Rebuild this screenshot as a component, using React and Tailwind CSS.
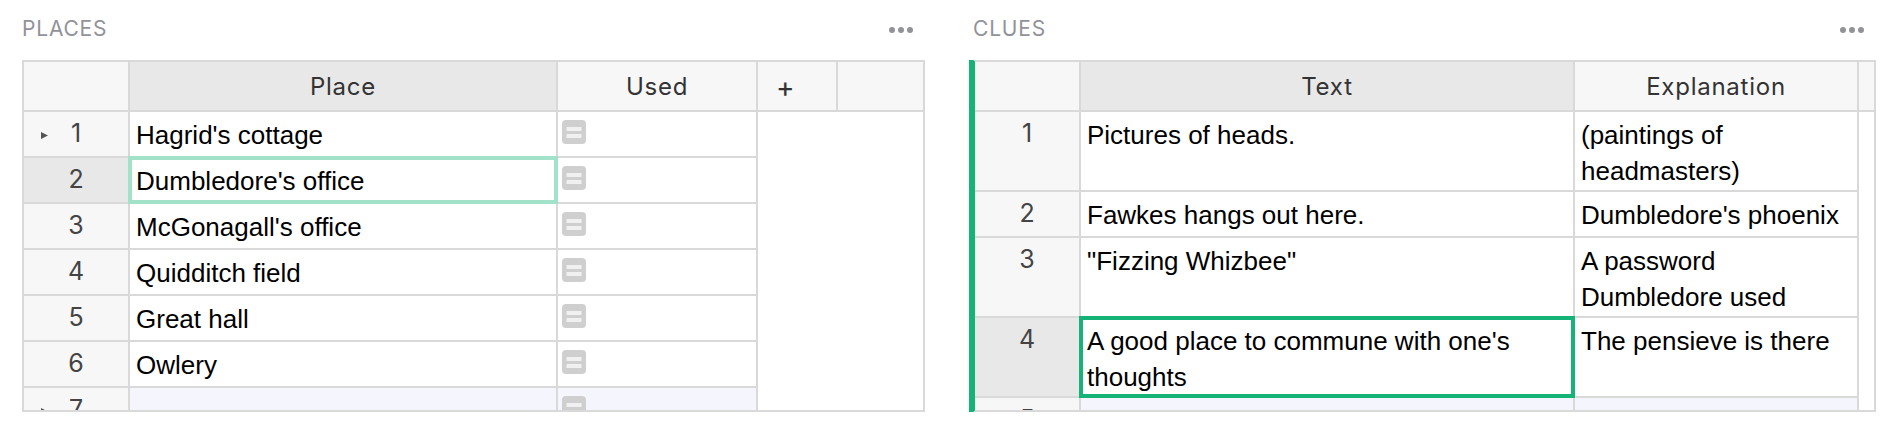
import React from 'react';

const places = ["Hagrid's cottage", "Dumbledore's office", "McGonagall's office", 'Quidditch field', 'Great hall', 'Owlery', ''];

const clues = [
  { h: 'h-[80px]', text: 'Pictures of heads.', note: '(paintings of headmasters)' },
  { h: 'h-[46px]', text: 'Fawkes hangs out here.', note: "Dumbledore's phoenix" },
  { h: 'h-[80px]', text: '"Fizzing Whizbee"', note: 'A password Dumbledore used' },
  { h: 'h-[80px]', text: "A good place to commune with one's thoughts", note: 'The pensieve is there', selected: true },
  { h: 'h-[46px]', text: '', note: '', isNew: true },
];

const ToggleIcon = () => (
  <svg width="24" height="24" viewBox="0 0 24 24" className="block">
    <rect width="24" height="24" rx="4" fill="#cfcfcf" />
    <rect x="4.5" y="7" width="15" height="4" fill="#f0f0f0" />
    <rect x="4.5" y="14" width="15" height="4" fill="#f0f0f0" />
  </svg>
);

const Dots = () => (
  <svg width="24" height="6" viewBox="0 0 24 6" className="block">
    <circle cx="3" cy="3" r="3" fill="#929299" />
    <circle cx="12" cy="3" r="3" fill="#929299" />
    <circle cx="21" cy="3" r="3" fill="#929299" />
  </svg>
);

const Arrow = () => (
  <svg width="7" height="7" viewBox="0 0 7 7" className="absolute left-[17px] top-[20px]">
    <polygon points="0,0 7,3.5 0,7" fill="#555555" />
  </svg>
);

const SectionTitle = ({ title }) => (
  <div className="h-[60px] flex items-center justify-between pr-[12px]">
    <span className="pb-[3px] font-['Inter',sans-serif] text-[21px] text-[#929299] tracking-[0.8px]">{title}</span>
    <Dots />
  </div>
);

const HeaderCell = ({ width, active, children }) => (
  <div className={`${width} ${active ? 'bg-[#e8e8e8]' : 'bg-[#f7f7f7]'} h-full shrink-0 border-r-2 border-[#d9d9d9] pt-[1px] flex items-center justify-center font-['Inter',sans-serif] text-[24px] tracking-[0.75px] text-[#333333]`}>
    {children}
  </div>
);

const RowNumber = ({ n, active, arrow }) => (
  <div className={`relative w-[106px] shrink-0 self-stretch border-r-2 border-b-2 border-[#d9d9d9] ${active ? 'bg-[#e8e8e8]' : 'bg-[#f7f7f7]'} text-center font-['Inter',sans-serif] text-[25px] leading-[43px] text-[#444444]`}>
    {arrow && <Arrow />}
    {n}
  </div>
);

const PlacesTable = () => (
  <div className="h-[352px] border-2 border-[#d9d9d9] overflow-hidden bg-white">
    <div className="h-[50px] flex border-b-2 border-[#d9d9d9]">
      <HeaderCell width="w-[106px]" />
      <HeaderCell width="w-[428px]" active>Place</HeaderCell>
      <HeaderCell width="w-[200px]">Used</HeaderCell>
      <div className="w-[80px] h-full shrink-0 bg-[#f7f7f7] border-r-2 border-[#d9d9d9] pl-[18px] font-['Inter',sans-serif] text-[28px] leading-[50px] text-[#333333]">+</div>
      <div className="flex-1 bg-[#f7f7f7]" />
    </div>
    {places.map((place, i) => {
      const isNew = i === 6;
      return (
        <div key={i} className="h-[46px] flex">
          <RowNumber n={i + 1} active={i === 1} arrow={i === 0 || isNew} />
          <div className={`relative w-[428px] shrink-0 border-r-2 border-b-2 border-[#d9d9d9] px-[6px] font-['Liberation_Sans',sans-serif] text-[26px] leading-[36px] pt-[5px] text-black ${isNew ? 'bg-[#f5f6fd]' : 'bg-white'}`}>
            {place}
            {i === 1 && <div className="absolute -inset-[2px] border-4 border-[#a2e2c9]" />}
          </div>
          <div className={`w-[200px] shrink-0 border-r-2 border-b-2 border-[#d9d9d9] pl-[4px] pt-[8px] ${isNew ? 'bg-[#f5f6fd]' : 'bg-white'}`}>
            <ToggleIcon />
          </div>
        </div>
      );
    })}
  </div>
);

const CluesTable = () => (
  <div className="flex">
    <div className="w-[6px] h-[352px] bg-[#16b378] rounded-tr-[2px] rounded-br-[2px]" />
    <div className="flex-1 h-[352px] border-y-2 border-r-2 border-[#d9d9d9] overflow-hidden bg-white">
      <div className="h-[50px] flex border-b-2 border-[#d9d9d9]">
        <HeaderCell width="w-[106px]" />
        <HeaderCell width="w-[494px]" active>Text</HeaderCell>
        <HeaderCell width="w-[284px]">Explanation</HeaderCell>
        <div className="flex-1 bg-[#f7f7f7]" />
      </div>
      {clues.map((row, i) => (
        <div key={i} className={`${row.h} flex`}>
          <RowNumber n={i + 1} active={row.selected} />
          <div className={`relative w-[494px] shrink-0 border-r-2 border-b-2 border-[#d9d9d9] px-[6px] pt-[5px] font-['Liberation_Sans',sans-serif] text-[26px] leading-[36px] text-black ${row.isNew ? 'bg-[#f5f6fd]' : 'bg-white'}`}>
            {row.text}
            {row.selected && <div className="absolute -inset-[2px] border-4 border-[#16b378]" />}
          </div>
          <div className={`w-[284px] shrink-0 border-r-2 border-b-2 border-[#d9d9d9] px-[6px] pt-[5px] font-['Liberation_Sans',sans-serif] text-[26px] leading-[36px] text-black ${row.isNew ? 'bg-[#f5f6fd]' : 'bg-white'}`}>
            {row.note}
          </div>
        </div>
      ))}
    </div>
  </div>
);

export default function App() {
  return (
    <div className="w-[1899px] h-[437px] bg-white pl-[22px] flex gap-[44px] overflow-hidden">
      <div className="w-[903px] shrink-0">
        <SectionTitle title="PLACES" />
        <PlacesTable />
      </div>
      <div className="w-[907px] shrink-0">
        <div className="pl-[4px]">
          <SectionTitle title="CLUES" />
        </div>
        <CluesTable />
      </div>
    </div>
  );
}
